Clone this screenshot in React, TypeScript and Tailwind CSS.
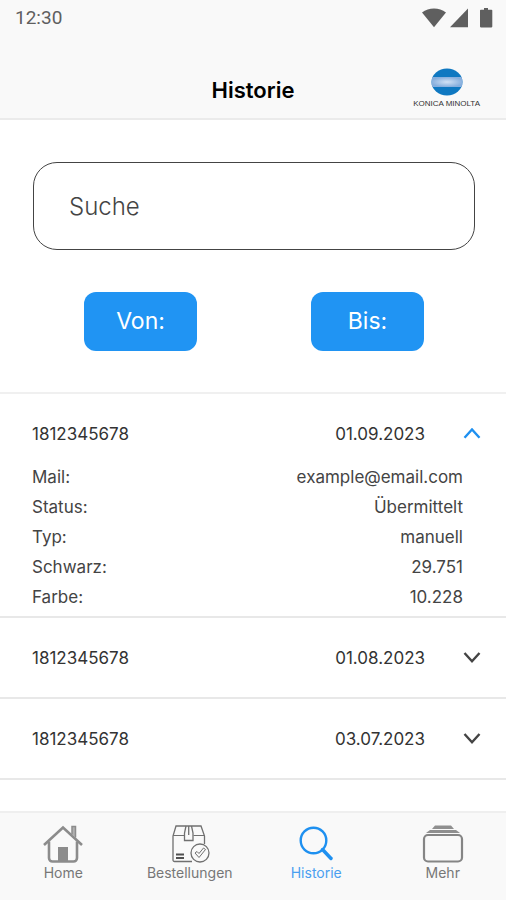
import { useState } from 'react';
import clsx from 'clsx';

interface HistoryEntry {
  id: string;
  serial: string;
  date: string;
  details: { label: string; value: string }[];
}

const entries: HistoryEntry[] = [
  {
    id: '2023-09',
    serial: '1812345678',
    date: '01.09.2023',
    details: [
      { label: 'Mail:', value: 'example@email.com' },
      { label: 'Status:', value: 'Übermittelt' },
      { label: 'Typ:', value: 'manuell' },
      { label: 'Schwarz:', value: '29.751' },
      { label: 'Farbe:', value: '10.228' },
    ],
  },
  { id: '2023-08', serial: '1812345678', date: '01.08.2023', details: [] },
  { id: '2023-07', serial: '1812345678', date: '03.07.2023', details: [] },
];

function StatusBar() {
  return (
    <div className="flex h-9 items-center justify-between pl-[15px] pr-3 text-[#5f5f5f]">
      <span className="font-[Roboto,sans-serif] text-[19px] leading-6">12:30</span>
      <svg width="72" height="20" viewBox="0 0 72 20" fill="currentColor" aria-hidden="true">
        <path d="M0 4.500C3.500 1.800 7.600.6 12 .6s8.500 1.200 12 3.900L12 19.200z" />
        <path d="M46 .6v18.600H28z" />
        <path d="M62 0h4v1.800h3.500a.8.8 0 0 1 .8.8v16a.8.8 0 0 1-.8.8H58.800a.8.8 0 0 1-.8-.8v-16a.8.8 0 0 1 .8-.8H62z" />
      </svg>
    </div>
  );
}

function BrandLogo() {
  return (
    <div className="flex flex-col items-center">
      <svg width="32" height="28" viewBox="0 0 32 28" aria-hidden="true">
        <defs>
          <radialGradient id="band" cx="0.5" cy="0.5" r="0.5">
            <stop offset="0" stopColor="#d3e2f5" />
            <stop offset="1" stopColor="#86aedd" />
          </radialGradient>
          <clipPath id="globe">
            <ellipse cx="16" cy="14" rx="15.500" ry="13.500" />
          </clipPath>
        </defs>
        <g clipPath="url(#globe)">
          <rect width="32" height="28" fill="#0f78c1" />
          <rect y="9" width="32" height="10" fill="url(#band)" />
        </g>
      </svg>
      <span className="mt-1 whitespace-nowrap font-['Liberation_Sans',sans-serif] text-[8px] leading-2 text-[#333]">
        KONICA MINOLTA
      </span>
    </div>
  );
}

function Chevron({ open }: { open: boolean }) {
  return (
    <svg
      width="18"
      height="12"
      viewBox="0 0 18 12"
      fill="none"
      stroke={open ? '#1e90f0' : '#444'}
      strokeWidth="2.400"
      aria-hidden="true"
    >
      <path d={open ? 'M1.500 9.800 9 1.500l7.500 8.300' : 'M1.500 1 9 9.300 16.500 1'} />
    </svg>
  );
}

function HistoryItem({ entry, open, onToggle }: { entry: HistoryEntry; open: boolean; onToggle: () => void }) {
  return (
    <li className="border-b-2 border-[#e8e8e8]">
      <button
        type="button"
        aria-expanded={open}
        onClick={onToggle}
        className={clsx(
          'flex w-full items-center pl-8 pr-[25px] pt-7 text-left text-[17px] leading-6 text-[#333]',
          open ? 'pb-4' : 'pb-[27px]'
        )}
      >
        <span className="flex-1">{entry.serial}</span>
        <span className="mr-[38px]">{entry.date}</span>
        <Chevron open={open} />
      </button>
      {open && entry.details.length > 0 && (
        <dl className="pb-1 pl-8 pr-[43px] text-[17px] leading-[30px] text-[#444]">
          {entry.details.map((detail) => (
            <div key={detail.label} className="flex justify-between">
              <dt>{detail.label}</dt>
              <dd>{detail.value}</dd>
            </div>
          ))}
        </dl>
      )}
    </li>
  );
}

function HomeIcon() {
  return (
    <svg width="40" height="38" viewBox="0 0 40 38" fill="none" stroke="#8c8c8c" aria-hidden="true">
      <path d="M1 20 20 2.500 39 20" strokeWidth="2.600" />
      <path d="M29 9.500V1.500h3.500v11" strokeWidth="1.500" fill="#b0b0b0" />
      <path d="M6 16.500V33a3.500 3.500 0 0 0 3.500 3.500h21A3.500 3.500 0 0 0 34 33V16.500" strokeWidth="2.600" />
      <path d="M15 22h10v14.500H15z" fill="#8c8c8c" stroke="none" />
    </svg>
  );
}

function OrdersIcon() {
  return (
    <svg width="40" height="38" viewBox="0 0 40 38" fill="none" stroke="#707070" strokeWidth="1.300" aria-hidden="true">
      <path d="M22 36.500H4.500A1.500 1.500 0 0 1 3 35V11L6 1h25l3.500 10v8" />
      <path d="M3 10.500h11.500M23.500 10.500h11" strokeWidth="1" />
      <path d="M16 1l-1.500 7v7.500h8.500V8l-1.500-7M18.700 1v9" />
      <path d="M6 29.500h8M6 33h8" strokeWidth="2" stroke="#505050" />
      <circle cx="30" cy="28" r="9" />
      <path d="m25 28 2-1.500 2 2 4.500-5.500 2 1.500-6.500 8z" strokeWidth="1" />
    </svg>
  );
}

function SearchIcon() {
  return (
    <svg width="40" height="38" viewBox="0 0 40 38" fill="none" stroke="#1e90f0" aria-hidden="true">
      <circle cx="17.500" cy="15.500" r="12.800" strokeWidth="2.400" />
      <path d="M26.500 24.500 35 33.500" strokeWidth="3.500" strokeLinecap="round" />
    </svg>
  );
}

function MoreIcon() {
  return (
    <svg width="42" height="38" viewBox="0 0 42 38" aria-hidden="true">
      <path d="M13 .5h16l3 3.500H10z" fill="#8f8f8f" />
      <path d="M8 5h26l4 3H4z" fill="#8f8f8f" />
      <rect x="2" y="10" width="38" height="26.500" rx="4" fill="none" stroke="#858585" strokeWidth="2.200" />
    </svg>
  );
}

const tabs = [
  { label: 'Home', icon: HomeIcon },
  { label: 'Bestellungen', icon: OrdersIcon },
  { label: 'Historie', icon: SearchIcon },
  { label: 'Mehr', icon: MoreIcon },
];

export default function App() {
  const [openId, setOpenId] = useState<string | null>('2023-09');
  const [query, setQuery] = useState('');

  const visible = entries.filter((entry) => entry.serial.includes(query) || entry.date.includes(query));

  return (
    <div className="flex min-h-screen flex-col bg-white font-[Inter,sans-serif]">
      <header className="border-b-2 border-[#ebebeb] bg-[#f9f9f9]">
        <StatusBar />
        <div className="grid h-[82px] grid-cols-[1fr_auto_1fr] items-center px-[26px] pt-[26px]">
          <h1 className="col-start-2 text-[22px] font-semibold leading-7 text-black">Historie</h1>
          <div className="justify-self-end pb-1">
            <BrandLogo />
          </div>
        </div>
      </header>

      <main>
        <div className="pl-[33px] pr-[31px]">
          <input
            type="text"
            aria-label="Suche"
            placeholder="Suche"
            value={query}
            onChange={(e) => setQuery(e.target.value)}
            className="mt-[42px] h-[88px] w-full rounded-3xl border border-[#444] px-[35px] text-[24px] font-light text-[#333] outline-none placeholder:text-[#444]"
          />

          <div className="flex justify-center gap-[114px] pb-[41px] pt-[42px] text-[23px] text-white">
            <button type="button" className="h-[59px] w-[113px] rounded-xl bg-[#2094f3]">
              Von:
            </button>
            <button type="button" className="h-[59px] w-[113px] rounded-xl bg-[#2094f3]">
              Bis:
            </button>
          </div>
        </div>

        <ul className="border-t-2 border-[#f0f0f0]">
          {visible.map((entry) => (
            <HistoryItem
              key={entry.id}
              entry={entry}
              open={openId === entry.id}
              onToggle={() => setOpenId(openId === entry.id ? null : entry.id)}
            />
          ))}
        </ul>
      </main>

      <nav className="mt-auto grid grid-cols-4 border-t-2 border-[#efefef] bg-[#f9f9f9] pb-[17px] pt-3">
        {tabs.map(({ label, icon: Icon }) => (
          <a
            key={label}
            href={`#${label.toLowerCase()}`}
            className={clsx(
              'flex flex-col items-center text-[14px] leading-5',
              label === 'Historie' ? 'text-[#4a9ff0]' : 'text-[#777]'
            )}
          >
            <Icon />
            {label}
          </a>
        ))}
      </nav>
    </div>
  );
}
